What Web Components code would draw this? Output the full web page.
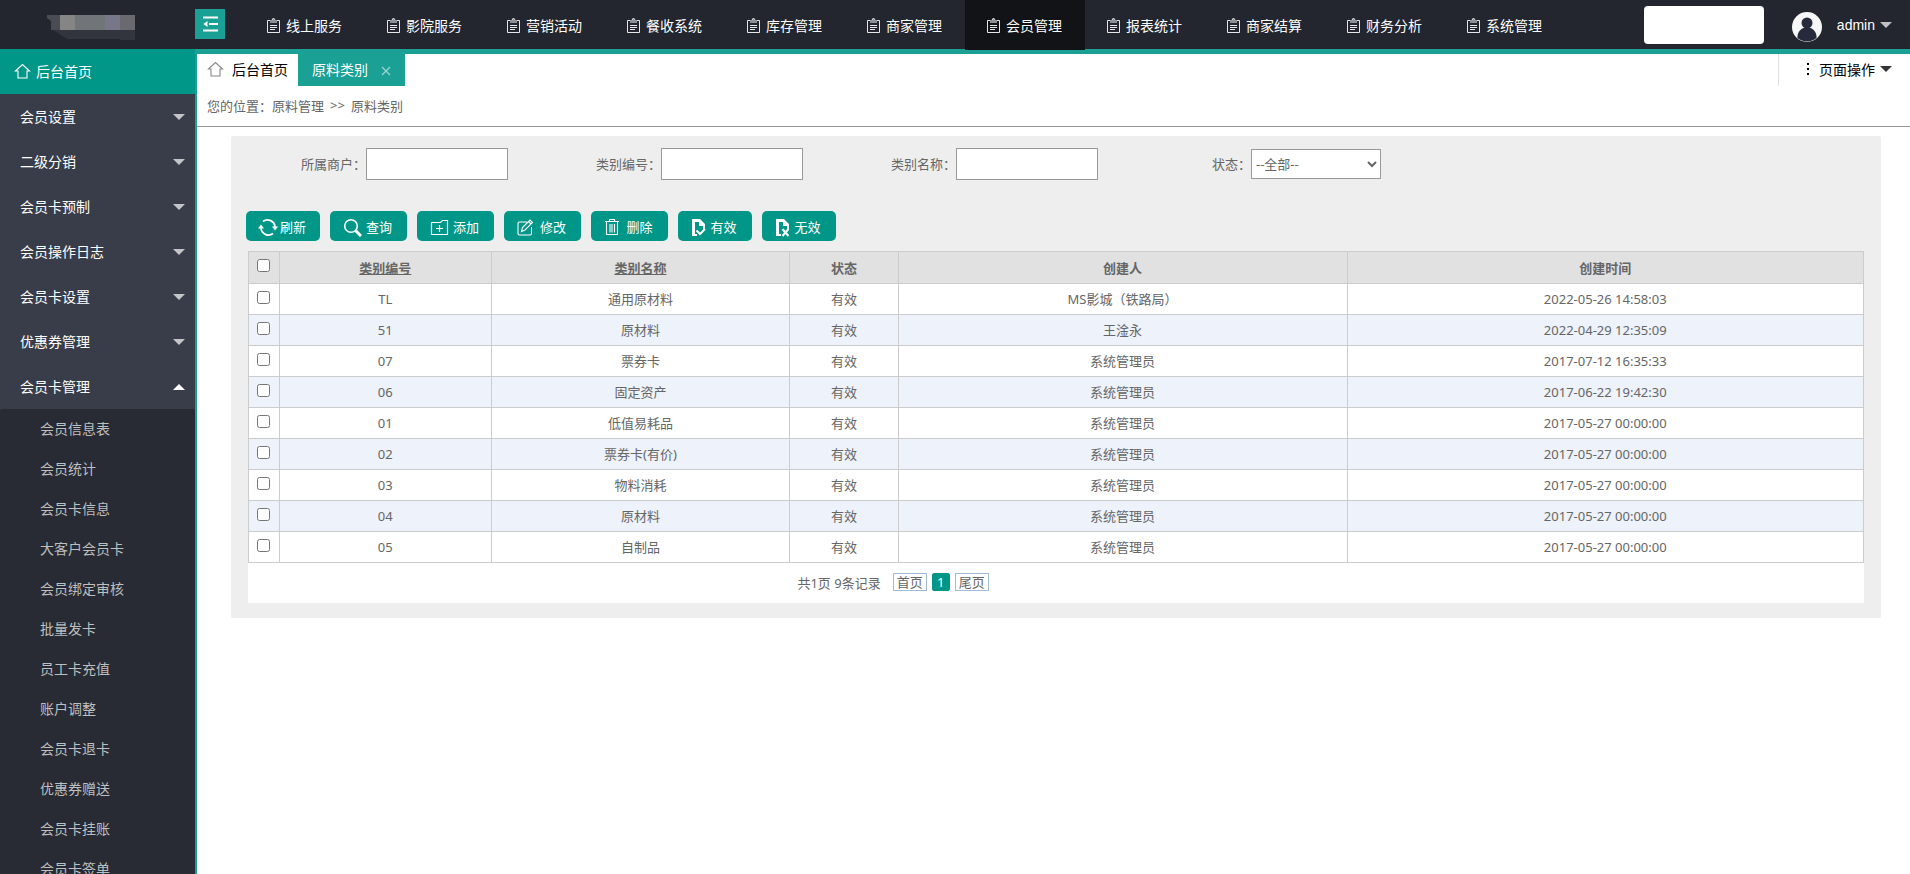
<!DOCTYPE html>
<html lang="zh-CN">
<head>
<meta charset="utf-8">
<title>原料类别</title>
<style>
html, body { margin: 0; height: 100%; }
body {
  overflow: hidden;
  background: #fff;
  color: #666;
  font-family: "Noto Sans", "Noto Sans CJK SC", sans-serif;
  font-size: 13px;
}
</style>
</head>
<body>
<admin-app></admin-app>
<script>
const define = (name, css, html) => {
  customElements.define(name, class extends HTMLElement {
    constructor() {
      super();
      const t = document.createElement('template');
      t.innerHTML = `<style>*{box-sizing:border-box}${css}</style>${typeof html === 'function' ? html(this) : html}`;
      this.attachShadow({ mode: 'open' }).appendChild(t.content.cloneNode(true));
    }
  });
};

const ICONS = {
  home: '<path d="M1.5 8 8.500 1.500 15.500 8H13v7H4V8z" fill="none" stroke="currentColor" stroke-width="1.100"/>',
  note: '<path d="M1.500 3.500h12v12h-12z" fill="none" stroke="currentColor"/><path d="M4 3h2l1.500-2L9 3h2v3H4z" fill="#8d9095"/><path d="M6 3 7.500 1 9 3" fill="none" stroke="currentColor"/><path d="M4 8.500h7M4 10.500h7M4 12.500h5" stroke="currentColor"/>',
  fold: '<path d="M1 1.500h15M7 8h9M1 14.500h15" stroke="currentColor" stroke-width="2"/><path d="M1.500 8 5.500 5v6z" fill="currentColor"/>',
  refresh: '<path d="M5 3.500a7.500 7.500 0 0 1 12 5.500M15 15.500A7.500 7.500 0 0 1 3 10" fill="none" stroke="currentColor" stroke-width="1.800"/><path d="M14 8.500h6l-3 4zM0 10.500h6l-3-4z" fill="currentColor"/>',
  search: '<circle cx="8" cy="8" r="6.300" fill="none" stroke="currentColor" stroke-width="1.600"/><path d="m12.500 12.500 5.500 5.500" stroke="currentColor" stroke-width="3"/>',
  add: '<path d="M1.500 4.500h9l2-2h5v14h-16z" fill="none" stroke="currentColor" stroke-width="1.200"/><path d="M9.500 7v7M6 10.500h7" stroke="currentColor" stroke-width="1.200"/>',
  edit: '<path d="M10 4H2.500Q1 4 1 5.500v10Q1 17 2.500 17H13q1.500 0 1.500-1.500V9" fill="none" stroke="currentColor" stroke-width="1.100"/><path d="m4.500 13.500 1-4L13 2l2.500 2.500-7.500 7.500zM11.500 3.500 14 6" fill="none" stroke="currentColor" stroke-width="1.100"/>',
  trash: '<path d="M1 3.500h14M5.500 3.500v-2h5v2M2.500 3.500v13h11v-13M6 6v8.500M8 6v8.500M10.500 6v8.500" fill="none" stroke="currentColor" stroke-width="1.100"/>',
  valid: '<path d="M1 1h8l5 5v5h-2V8H8V4H4v12h2v2H1z" fill="currentColor"/><path d="M5.500 12.500 9 16l5-5" fill="none" stroke="currentColor" stroke-width="2"/>',
  invalid: '<path d="M1 1h8l5 5v5h-2V8H8V4H4v12h2v2H1z" fill="currentColor"/><path d="m7.500 11 6 7m0-7-6 7" stroke="currentColor" stroke-width="2"/>',
  close: '<path d="m1 1 8 8m0-8-8 8" stroke="currentColor" stroke-width="1.200"/>',
  down: '<path d="M0 0h12L6 6z" fill="currentColor"/>',
  up: '<path d="M0 6h12L6 0z" fill="currentColor"/>',
  user: '<circle cx="15" cy="15" r="15" fill="#f7f7f7"/><circle cx="15" cy="11" r="5.500" fill="#262a3a"/><path d="M5.500 26C5 20 9 16.500 12 16h6c3 .5 7 4 6.500 10a15 15 0 0 1-19 0z" fill="#262a3a"/>',
  mosaic: '<path d="M0 0h13v15H4V6L0 3z" fill="#4a4c54"/><path d="M13 0h15v15H13z" fill="#858585"/><path d="M28 0h15v15H28z" fill="#717478"/><path d="M43 0h15v15H43z" fill="#707577"/><path d="M58 0h15v15H58z" fill="#78778a"/><path d="M73 0h15v15H73z" fill="#6b6970"/><path d="M6 15h82v10H73v-1H20z" fill="#32353e"/>'
};
const icon = (n, w, h = w) => `<svg width="${w}" height="${h}" viewBox="0 0 ${w} ${h}" aria-hidden="true">${ICONS[n]}</svg>`;

define('nav-item', `
:host { display: block; flex: 0 0 120px; }
a { display: flex; align-items: center; justify-content: center; gap: 5px; height: 50px; padding-right: 2px; color: #fff; font-size: 14px; text-decoration: none; white-space: nowrap; }
svg { color: #e4e6e8; }
:host([active]) a { background: #111316; }`,
`<a href="#">${icon('note', 15, 17)}<slot></slot></a>`);

define('top-bar', `
:host { display: flex; height: 54px; background: #23262e; border-bottom: 5px solid #1aa094; color: #fff; }
.logo { flex: 0 0 195px; padding: 15px 0 0 47px; }
svg { display: block; }
.fold { width: 30px; height: 30px; margin-top: 9px; padding: 0; display: grid; place-items: center; border: 0; background: #1aa094; color: #fff; }
nav { display: flex; flex: 1; margin-left: 20px; height: 49px; }
.search { width: 120px; height: 38px; margin-top: 6px; border: 0; border-radius: 4px; background: #fff; }
.user { display: flex; align-items: center; height: 50px; margin: 0 18px 0 28px; padding: 0; border: 0; background: none; color: #fff; font: 14px "Liberation Sans", sans-serif; }
.user span { margin: 0 5px 0 15px; }
.user svg:last-child { color: #c0c1c3; }
.user svg:first-child { margin-top: 4px; }`,
`<div class="logo">${icon('mosaic', 88, 25)}</div>
<button class="fold" aria-label="收起菜单">${icon('fold', 17, 16)}</button>
<nav>${['线上服务','影院服务','营销活动','餐收系统','库存管理','商家管理','会员管理','报表统计','商家结算','财务分析','系统管理'].map((t, i) => `<nav-item${i === 6 ? ' active' : ''}>${t}</nav-item>`).join('')}</nav>
<input class="search" type="text" aria-label="搜索">
<button class="user">${icon('user', 30)}<span>admin</span>${icon('down', 12, 6)}</button>`);

define('side-item', `
:host { display: block; }
a { display: flex; align-items: center; justify-content: space-between; height: 45px; padding: 0 10px 2px 20px; color: #fff; font-size: 14px; text-decoration: none; }
svg { margin-top: 2px; color: #c4c5c9; }
:host([open]) svg { color: #fff; }
:host([home]) a { justify-content: flex-start; gap: 5px; padding-left: 14px; background: #009688; }
:host([home]) svg { margin-top: 0; color: #fff; }
:host([sub]) a { height: 40px; padding-left: 40px; color: #bebfc0; }`,
el => `<a href="#">${el.hasAttribute('home') ? icon('home', 17, 16) : ''}<slot></slot>${el.hasAttribute('home') || el.hasAttribute('sub') ? '' : el.hasAttribute('open') ? icon('up', 12, 6) : icon('down', 12, 6)}</a>`);

define('side-menu', `
:host { display: block; overflow: hidden; background: #393d49; border-right: 2px solid #1aa094; margin-top: -5px; }
.sub { background: #282b33; border-radius: 2px; }`,
() => `<nav><side-item home>后台首页</side-item>
${['会员设置','二级分销','会员卡预制','会员操作日志','会员卡设置','优惠券管理'].map(t => `<side-item>${t}</side-item>`).join('')}
<side-item open>会员卡管理</side-item>
<div class="sub">${['会员信息表','会员统计','会员卡信息','大客户会员卡','会员绑定审核','批量发卡','员工卡充值','账户调整','会员卡退卡','优惠券赠送','会员卡挂账','会员卡签单'].map(t => `<side-item sub>${t}</side-item>`).join('')}</div></nav>`);

define('page-tabs', `
:host { display: flex; height: 32px; font-size: 14px; }
a, button { display: flex; align-items: center; padding: 0 0 2px; color: #000; text-decoration: none; }
.home { gap: 8px; padding: 0 10px 2px; }
.home svg { color: #888; }
.tab { display: flex; gap: 13px; padding: 0 14px; background: #1aa094; }
.tab a { color: #fff; }
button { border: 0; background: none; font: inherit; }
.tab button { padding: 2px 0 0; color: #9fd5cf; }
.ops { margin-left: auto; padding: 0 18px 2px 27px; border-left: 1px solid #e2e2e2; gap: 5px; }
.ops svg:first-child { margin-right: 4px; }
.ops svg:last-child { color: #333; }`,
`<a class="home" href="#">${icon('home', 17, 16)}后台首页</a>
<div class="tab"><a href="#">原料类别</a><button aria-label="关闭">${icon('close', 10)}</button></div>
<button class="ops"><svg width="4" height="14" viewBox="0 0 4 14" aria-hidden="true"><path d="M1 1h2v2H1zM1 6h2v2H1zM1 11h2v2H1z"/></svg><span>页面操作</span>${icon('down', 12, 6)}</button>`);

define('bread-crumb', `
:host { display: flex; align-items: center; height: 41px; padding: 0 10px 2px; border-bottom: 1px solid #999; }
::slotted(b) { margin: 0 6px; font-weight: normal; }`,
'<slot></slot>');

define('form-field', `
:host { display: flex; align-items: center; justify-content: flex-end; width: 295px; height: 32px; }
label { padding-bottom: 2px; }
input, select { border: 1px solid #999; background: #fff; color: #666; font: inherit; border-radius: 0; }
input { width: 142px; height: 32px; }
select { width: 130px; height: 30px; padding: 0; }
:host([kind=select]) { width: 283px; }`,
el => {
  const l = el.getAttribute('label');
  return `<label for="f">${l}：</label>${el.getAttribute('kind') === 'select' ? '<select id="f"><option>--全部--</option></select>' : '<input id="f" type="text">'}`;
});

define('tool-button', `
:host { display: block; }
button { display: flex; align-items: center; justify-content: center; gap: var(--gap, 4px); width: var(--w, 77px); height: 30px; padding: 0 2px 0 0; border: 0; border-radius: 5px; background: #009688; color: #fff; font: inherit; }
svg { margin-top: 2px; }`,
el => `<button>${icon(el.getAttribute('icon'), +el.getAttribute('size'), 19)}<span><slot></slot></span></button>`);

define('data-table', `
:host { display: block; }
table { width: 100%; table-layout: fixed; border-collapse: collapse; background: #fff; }
th, td { height: 31px; padding: 0; border: 1px solid #ccc; text-align: center; line-height: 20px; }
th { height: 32px; background: #e1e1e1; }
th a { color: inherit; }
tbody tr:nth-child(even) { background: #edf2fb; }
input { display: block; width: 13px; height: 13px; margin: 0 9px 4px 8px; }`,
() => {
  const rows = [
    ['TL','通用原材料','MS影城（铁路局）','2022-05-26 14:58:03'],
    ['51','原材料','王淦永','2022-04-29 12:35:09'],
    ['07','票券卡','系统管理员','2017-07-12 16:35:33'],
    ['06','固定资产','系统管理员','2017-06-22 19:42:30'],
    ['01','低值易耗品','系统管理员','2017-05-27 00:00:00'],
    ['02','票券卡(有价)','系统管理员','2017-05-27 00:00:00'],
    ['03','物料消耗','系统管理员','2017-05-27 00:00:00'],
    ['04','原材料','系统管理员','2017-05-27 00:00:00'],
    ['05','自制品','系统管理员','2017-05-27 00:00:00']
  ];
  return `<table><colgroup><col style="width:31px"><col style="width:13.1%"><col style="width:18.5%"><col style="width:6.7%"><col style="width:27.8%"><col></colgroup>
<thead><tr><th><input type="checkbox" aria-label="全选"></th><th><a href="#">类别编号</a></th><th><a href="#">类别名称</a></th><th>状态</th><th>创建人</th><th>创建时间</th></tr></thead>
<tbody>${rows.map(r => `<tr><td><input type="checkbox" aria-label="${r[0]}"></td><td>${r[0]}</td><td>${r[1]}</td><td>有效</td><td>${r[2]}</td><td>${r[3]}</td></tr>`).join('')}</tbody></table>`;
});

define('page-nav', `
:host { display: flex; align-items: center; height: 40px; padding: 0 0 2px 34%; background: #fff; }
span { margin-right: 12px; }
nav { display: flex; gap: 5px; }
a { height: 18px; padding: 0 3px; border: 1px solid #a0bcd8; color: inherit; line-height: 16px; text-decoration: none; }
a.on { width: 18px; padding: 0; border-color: #009688; border-radius: 2px; background: #009688; color: #fff; text-align: center; }`,
'<span>共1页 9条记录</span><nav><a href="#">首页</a><a href="#" class="on">1</a><a href="#">尾页</a></nav>');

define('list-panel', `
:host { display: block; margin: 9px 29px 0 34px; padding: 12px 17px 15px; border-radius: 2px; background: #eee; }
form { display: flex; margin-bottom: 31px; margin-left: -35px; }
.tools { display: flex; gap: 10px; margin: 0 0 10px -2px; }`,
`<form><form-field label="所属商户"></form-field><form-field label="类别编号"></form-field><form-field label="类别名称"></form-field><form-field label="状态" kind="select"></form-field></form>
<div class="tools">
<tool-button icon="refresh" size="20" style="--w:74px;--gap:2px">刷新</tool-button>
<tool-button icon="search" size="19">查询</tool-button>
<tool-button icon="add" size="19">添加</tool-button>
<tool-button icon="edit" size="17" style="--gap:6px">修改</tool-button>
<tool-button icon="trash" size="16" style="--gap:6px">删除</tool-button>
<tool-button icon="valid" size="15" style="--w:74px">有效</tool-button>
<tool-button icon="invalid" size="15" style="--w:74px">无效</tool-button>
</div>
<data-table></data-table><page-nav></page-nav>`);

define('admin-app', `
:host { display: grid; grid-template: auto minmax(0, 1fr) / 197px minmax(0, 1fr); height: 100vh; }
top-bar { grid-column: 1 / -1; }
main { min-width: 0; }`,
`<top-bar></top-bar><side-menu></side-menu>
<main><page-tabs></page-tabs><bread-crumb>您的位置：原料管理<b>&gt;&gt;</b>原料类别</bread-crumb><list-panel></list-panel></main>`);
</script>
</body>
</html>
